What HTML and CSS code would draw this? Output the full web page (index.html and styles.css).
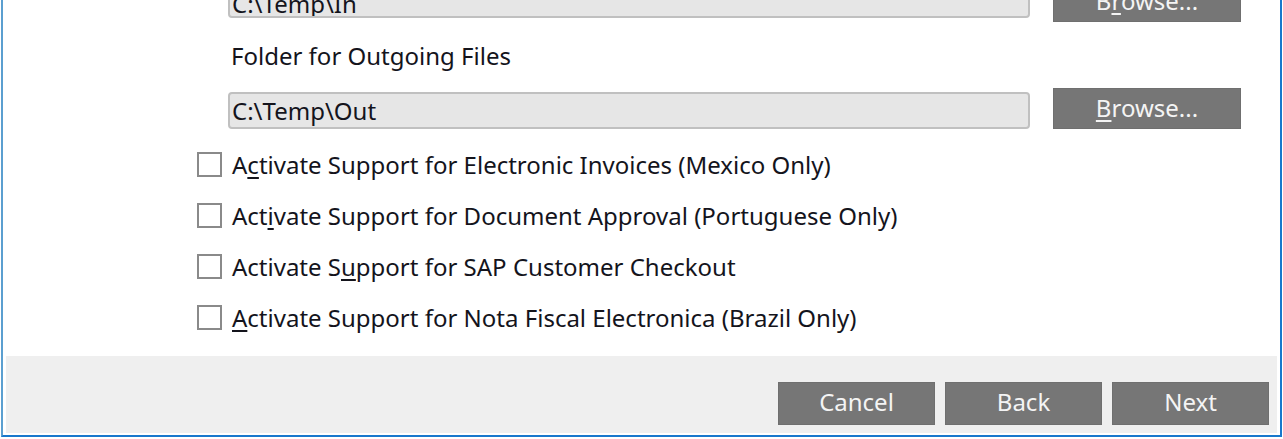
FILE: index.html
```html
<!DOCTYPE html>
<html lang="en">
<head>
<meta charset="utf-8">
<title>Setup</title>
<link rel="stylesheet" href="styles.css">
</head>
<body>
<form class="dialog">
  <main class="content">
    <div class="path-row">
      <input class="path path-short" type="text" value="C:\Temp\In" aria-label="Folder for Incoming Files" readonly>
      <button class="btn browse" type="button"><span>B<u>r</u>owse...</span></button>
    </div>
    <label class="path-label" for="outgoing">Folder for Outgoing Files</label>
    <div class="path-row">
      <input class="path" id="outgoing" type="text" value="C:\Temp\Out" readonly>
      <button class="btn browse" type="button"><span><u>B</u>rowse...</span></button>
    </div>
    <div class="options">
      <label class="option"><input class="check" type="checkbox"><span>A<u>c</u>tivate Support for Electronic Invoices (Mexico Only)</span></label>
      <label class="option"><input class="check" type="checkbox"><span>Act<u>i</u>vate Support for Document Approval (Portuguese Only)</span></label>
      <label class="option"><input class="check" type="checkbox"><span>Activate S<u>u</u>pport for SAP Customer Checkout</span></label>
      <label class="option"><input class="check" type="checkbox"><span><u>A</u>ctivate Support for Nota Fiscal Electronica (Brazil Only)</span></label>
    </div>
  </main>
  <footer class="actions">
    <button class="btn action" type="button">Cancel</button>
    <button class="btn action" type="button">Back</button>
    <button class="btn action" type="button">Next</button>
  </footer>
</form>
</body>
</html>
```
FILE: styles.css
```css
* { box-sizing: border-box; }

body {
  margin: 0;
  background: #fff;
  color: #14141c;
  font: 24px/32px "Noto Sans", "Open Sans", sans-serif;
}

.dialog {
  display: flex;
  flex-direction: column;
  justify-content: flex-end;
  height: calc(100vh - 2px);
  margin: 0 1px;
  overflow: hidden;
  border: 2px solid #1878cc;
  border-left-color: #5b9fd0;
  border-top: 0;
}

.content {
  flex: none;
  padding: 0 39px 13px 194px;
}

.path-row {
  display: flex;
  align-items: flex-end;
  gap: 23px;
  padding-left: 31px;
}

.path {
  flex: 1;
  min-width: 0;
  height: 37px;
  padding: 0 2px;
  border: 2px solid #c0c0c0;
  border-radius: 4px;
  background: #e6e6e6;
  color: inherit;
  font: inherit;
}

.path-short {
  height: 29px;
  margin-bottom: 4px;
}

.path-label {
  display: block;
  padding: 18px 0 16px 34px;
}

.btn {
  flex: none;
  padding: 0 0 4px;
  border: 1px solid #6f6f6f;
  background: #767676;
  color: #f4f4f4;
  font: inherit;
}

.browse {
  width: 188px;
  height: 41px;
  padding-bottom: 2px;
}

.action {
  width: 157px;
  height: 43px;
}

.options {
  padding-top: 10px;
}

.option {
  display: flex;
  align-items: center;
  gap: 10px;
  height: 51px;
}

.check {
  appearance: none;
  flex: none;
  width: 25px;
  height: 25px;
  margin: 0;
  border: 2px solid #8a8a8a;
  background: #fff;
}

.check:checked { background: #767676; }

u {
  text-decoration-thickness: 2px;
  text-underline-offset: 3px;
  text-decoration-skip-ink: none;
}

.actions {
  display: flex;
  flex: none;
  justify-content: flex-end;
  gap: 10px;
  margin: 0 3px 2px;
  padding: 26px 8px 8px;
  background: #efefef;
}
```
